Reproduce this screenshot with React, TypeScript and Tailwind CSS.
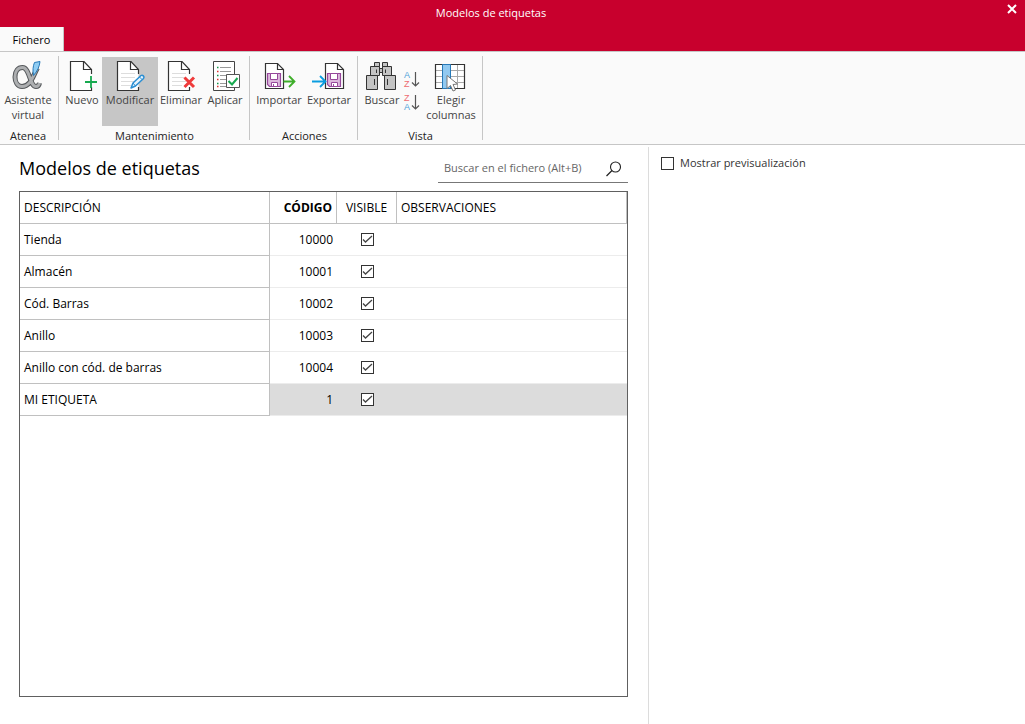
import { useState, type ReactNode } from "react";

const rows = [
  { name: "Tienda", code: 10000 },
  { name: "Almacén", code: 10001 },
  { name: "Cód. Barras", code: 10002 },
  { name: "Anillo", code: 10003 },
  { name: "Anillo con cód. de barras", code: 10004 },
  { name: "MI ETIQUETA", code: 1 },
];

function Icon({ children }: { children: ReactNode }) {
  return (
    <svg viewBox="0 0 32 32" className="h-8 w-8 shrink-0 overflow-visible" fill="none" aria-hidden="true">
      {children}
    </svg>
  );
}

function Page({ lines = false }: { lines?: boolean }) {
  return (
    <>
      <path d="M24.5 14V9.5L17 1.5H3.5V30.5H24.5V27" fill="#fff" stroke="#333" strokeWidth="1.2" />
      <path d="M16.5 1.5V9.5H24.5" stroke="#333" strokeWidth="1.2" />
      {lines && <path d="M7 13.5H21M7 17.5H21M7 21.5H21M7 25.5H17" stroke="#ddd" />}
    </>
  );
}

function DiskPage() {
  return (
    <>
      <path d="M2.5 3.5H14.5L20.5 9.5V28.5H2.5Z" fill="#fff" stroke="#333" strokeWidth="1.2" />
      <path d="M14.5 3.5V9.5H20.5" stroke="#333" strokeWidth="1.2" />
      <path d="M4.5 13.5H17.5V26.5H6.5L4.5 24.5Z" fill="#dcb9dc" stroke="#96479b" strokeWidth="1.2" />
      <path d="M7.5 13.5H14.5V19.5H7.5Z" fill="#fff" stroke="#96479b" />
      <path d="M8.5 22.5H14.5V26.5H8.5Z" fill="#fff" stroke="#96479b" />
      <path d="M10.5 24V26" stroke="#96479b" />
    </>
  );
}

function AlphaIcon() {
  const d = "M25.5 8C21.5 14.5 19 26.5 10 26.5C5.5 26.5 3 22 3 17C3 11 6 7.5 10.5 7.5C18 7.5 17.5 26.5 24 26.5C26 26.5 27 25.5 27.5 23";
  return (
    <Icon>
      <path d={d} stroke="#55585b" strokeWidth="5" />
      <path d={d} stroke="#adafb1" strokeWidth="3" />
      <path d="M22.5 2.5L28 1.5C27.5 6.5 25.5 11 21.5 15.5C20.5 10.5 21 6 22.5 2.5Z" fill="#8fcdf3" stroke="#2679b8" />
    </Icon>
  );
}

function NewIcon() {
  return (
    <Icon>
      <g transform="translate(1 0)">
        <Page />
      </g>
      <path d="M25 16V28M19 22H31" stroke="#17a94f" strokeWidth="1.8" />
    </Icon>
  );
}

function EditIcon() {
  return (
    <Icon>
      <Page lines />
      <path d="M17 28L19 23L27 15.5C28.5 14.5 31 16.5 29.5 18.5L21.5 26Z" fill="#e6f3fc" stroke="#2b8ed2" strokeWidth="1.5" strokeLinejoin="round" />
      <path d="M25.5 17L28 19.5M19 23L21.5 26" stroke="#2b8ed2" />
    </Icon>
  );
}

function DeleteIcon() {
  return (
    <Icon>
      <Page lines />
      <path d="M19.5 17.5L29 27M29 17.5L19.5 27" stroke="#ef3b3b" strokeWidth="3" />
    </Icon>
  );
}

function ApplyIcon() {
  return (
    <Icon>
      <path d="M4.5 1.5H25.5V30.5H4.5Z" fill="#fff" stroke="#444" />
      <path d="M11 7.5H22M11 11.5H22M11 15.5H18M11 19.5H17M11 23.5H17M11 26.5H19" stroke="#999" />
      <path d="M8 7.5H9.5M8 15.5H9.5M8 23.5H9.5" stroke="#16934a" strokeWidth="1.5" />
      <path d="M8 11.5H9.5M8 19.5H9.5M8 26.5H9.5" stroke="#d33" strokeWidth="1.5" />
      <path d="M17.5 14.5H30.5V27.5H17.5Z" fill="#fff" stroke="#555" />
      <path d="M19.5 21L23 24.5L28.5 18" stroke="#17a94f" strokeWidth="2" />
    </Icon>
  );
}

function ImportIcon() {
  return (
    <Icon>
      <DiskPage />
      <path d="M20.5 21.5H31.5M26 16L31.5 21.5L26 27" stroke="#3fae2a" strokeWidth="1.8" />
    </Icon>
  );
}

function ExportIcon() {
  return (
    <Icon>
      <g transform="translate(10 0)">
        <DiskPage />
      </g>
      <path d="M-1 21.5H12M7 16L12.5 21.5L7 27" stroke="#0a9de0" strokeWidth="1.8" />
    </Icon>
  );
}

function BinocularsIcon() {
  return (
    <Icon>
      <g fill="#c4c4c4" stroke="#333">
        <path d="M8.5 2.5H13.5V6.5H8.5ZM16.5 2.5H21.5V6.5H16.5Z" />
        <path d="M13.5 8.5H16.5V12.5H13.5Z" />
        <path d="M4.5 6.5H13.5V15.5H4.5ZM16.5 6.5H25.5V15.5H16.5Z" />
        <path d="M0.5 15.5H11.5V29.5H0.5ZM18.5 15.5H29.5V29.5H18.5Z" />
        <path d="M8.5 19V25M21.5 19V25M10.5 9.5V13M19.5 9.5V13" />
      </g>
    </Icon>
  );
}

function ColumnsIcon() {
  return (
    <Icon>
      <path d="M0.5 4.5H29.5V28.5H0.5Z" fill="#fff" />
      <path d="M1 10.5H29M1 16.5H29M1 22.5H29M22.5 5V28" stroke="#aaa" />
      <path d="M0.5 4.5H29.5V28.5H0.5Z" stroke="#333" strokeWidth="1.2" />
      <path d="M7.5 4.5H15.5V28.5H7.5Z" fill="#91c9f0" stroke="#2679b8" />
      <path d="M12 15.5V28.5L15.5 25.5L18 31L20.5 30L18 24.5L22.5 24Z" fill="#fff" stroke="#777" />
    </Icon>
  );
}

function SortIcon({ desc = false }: { desc?: boolean }) {
  return (
    <svg viewBox="0 0 16 18" className="h-[18px] w-4 overflow-visible" fill="none" aria-hidden="true">
      <text x="0" y="7" fontSize="9" fontFamily="Liberation Sans, sans-serif" fill={desc ? "#ee6b70" : "#4f9fd8"}>
        {desc ? "Z" : "A"}
      </text>
      <text x="0" y="16" fontSize="9" fontFamily="Liberation Sans, sans-serif" fill={desc ? "#4f9fd8" : "#ee6b70"}>
        {desc ? "A" : "Z"}
      </text>
      <path d="M11.5 1V15M8 11.5L11.5 15L15 11.5" stroke="#555" strokeWidth="1.2" />
    </svg>
  );
}

type ToolProps = { icon: ReactNode; label: string; width: string; active?: boolean };

function Tool({ icon, label, width, active }: ToolProps) {
  return (
    <button
      type="button"
      className={`flex h-[69px] flex-col items-center pt-[3px] text-[11px] leading-[15px] text-[#444] ${width} ${active ? "bg-[#c6c6c6]" : "hover:bg-gray-200"}`}
    >
      {icon}
      <span className="flex flex-col items-center whitespace-nowrap">
        {label.split(" ").map((word) => (
          <span key={word}>{word}</span>
        ))}
      </span>
    </button>
  );
}

function Group({ title, width, children }: { title: string; width: string; children: ReactNode }) {
  return (
    <section className={`flex shrink-0 flex-col justify-between border-r border-[#c6c6c6] ${width}`}>
      <div className="flex pt-px">{children}</div>
      <h2 className="text-center text-[11px] leading-[8px] text-[#222]">{title}</h2>
    </section>
  );
}

type CheckProps = { id?: string; label?: string; checked: boolean; onChange: () => void };

function Check({ id, label, checked, onChange }: CheckProps) {
  return (
    <span className="inline-grid h-[13px] w-[13px] shrink-0 align-middle">
      <input
        id={id}
        type="checkbox"
        aria-label={label}
        checked={checked}
        onChange={onChange}
        className="peer col-start-1 row-start-1 h-[13px] w-[13px] appearance-none border border-[#333] bg-white"
      />
      <svg viewBox="0 0 13 13" className="pointer-events-none col-start-1 row-start-1 hidden peer-checked:block" fill="none">
        <path d="M2 6.5L4.5 9L11 3" stroke="#444" strokeWidth="1.3" />
      </svg>
    </span>
  );
}

export default function App() {
  const [visible, setVisible] = useState<boolean[]>(rows.map(() => true));
  const [preview, setPreview] = useState(false);
  const [query, setQuery] = useState("");

  const toggle = (i: number) => setVisible(visible.map((v, n) => (n === i ? !v : v)));

  return (
    <div className="flex min-h-screen flex-col bg-white font-['Open_Sans','Noto_Sans',sans-serif] text-[12px] text-black">
      <header className="bg-[#c8002d]">
        <div className="grid h-[27px] grid-cols-[1fr_auto_1fr] items-center text-white">
          <h1 className="col-start-2 pr-[43px] text-[11px]">Modelos de etiquetas</h1>
          <button type="button" aria-label="Cerrar" className="mr-2 mb-2.5 justify-self-end">
            <svg viewBox="0 0 10 10" className="h-[10px] w-[10px]" fill="none">
              <path d="M1 1L9 9M9 1L1 9" stroke="#fff" strokeWidth="2" />
            </svg>
          </button>
        </div>
        <nav className="flex">
          <button type="button" className="-mb-px h-[25px] w-16 border-r border-[#c6c6c6] bg-[#fafafa] pt-0.5 text-center text-[11px]">
            Fichero
          </button>
        </nav>
      </header>

      <div className="flex h-[94px] border-y border-[#c6c6c6] bg-[#fafafa] pt-1 pb-1">
        <Group title="Atenea" width="w-[59px] pr-[2px]">
          <Tool icon={<AlphaIcon />} label="Asistente virtual" width="w-14" />
        </Group>
        <Group title="Mantenimiento" width="w-[191px] pl-[3px] pr-[2px]">
          <Tool icon={<NewIcon />} label="Nuevo" width="w-10" />
          <Tool icon={<EditIcon />} label="Modificar" width="w-14" active />
          <Tool icon={<DeleteIcon />} label="Eliminar" width="w-[46px]" />
          <Tool icon={<ApplyIcon />} label="Aplicar" width="w-[42px]" />
        </Group>
        <Group title="Acciones" width="w-[108px] pl-1 pr-[2px]">
          <Tool icon={<ImportIcon />} label="Importar" width="w-[50px]" />
          <Tool icon={<ExportIcon />} label="Exportar" width="w-[50px]" />
        </Group>
        <Group title="Vista" width="w-[125px] pl-[3px] pr-[2px]">
          <Tool icon={<BinocularsIcon />} label="Buscar" width="w-[42px]" />
          <div className="flex w-[22px] flex-col gap-[5px] pt-[14px] pl-px">
            <button type="button" aria-label="Orden ascendente">
              <SortIcon />
            </button>
            <button type="button" aria-label="Orden descendente">
              <SortIcon desc />
            </button>
          </div>
          <Tool icon={<ColumnsIcon />} label="Elegir columnas" width="w-[52px]" />
        </Group>
      </div>

      <main className="grid flex-1 grid-cols-[649fr_376fr] pt-[2px]">
        <section className="flex flex-col border-r border-[#dcdcdc] pr-5 pb-[27px] pl-[19px]">
          <div className="flex h-[36px] items-end justify-between">
            <h2 className="pb-[3px] text-[18px] leading-[24px]">Modelos de etiquetas</h2>
            <label className="flex h-7 w-[190px] items-center border-b border-[#777] pr-1.5 pl-1.5">
              <input
                type="text"
                value={query}
                onChange={(e) => setQuery(e.target.value)}
                placeholder="Buscar en el fichero (Alt+B)"
                aria-label="Buscar en el fichero"
                className="min-w-0 flex-1 bg-transparent text-[11px] outline-none placeholder:text-[#666]"
              />
              <svg viewBox="0 0 16 16" className="h-4 w-4 shrink-0" fill="none">
                <circle cx="9.5" cy="6" r="5" stroke="#222" strokeWidth="1.1" />
                <path d="M6 9.5L0.5 15" stroke="#222" strokeWidth="1.2" />
              </svg>
            </label>
          </div>

          <div className="mt-2 flex-1 border border-[#606060]">
            <table className="w-full table-fixed border-separate border-spacing-0">
              <thead>
                <tr className="h-8 text-left [&>th]:border-r [&>th]:border-b [&>th]:border-[#c0c0c0] [&>th]:px-1">
                  <th className="w-[250px] font-normal">DESCRIPCIÓN</th>
                  <th className="w-[67px] text-right font-bold">CÓDIGO</th>
                  <th className="w-[60px] text-center font-normal">VISIBLE</th>
                  <th className="font-normal">OBSERVACIONES</th>
                </tr>
              </thead>
              <tbody>
                {rows.map((row, i) => (
                  <tr key={row.code} className="h-8 [&>td]:border-b [&>td]:border-[#ececec] last:[&>td]:bg-[#dcdcdc]">
                    <th className="border-r border-b border-[#c0c0c0] bg-white px-1 text-left font-normal">{row.name}</th>
                    <td className="pr-1 text-right">{row.code}</td>
                    <td className="text-center leading-none">
                      <Check label={`${row.name} visible`} checked={visible[i]} onChange={() => toggle(i)} />
                    </td>
                    <td />
                  </tr>
                ))}
              </tbody>
            </table>
          </div>
        </section>

        <aside className="pt-2 pl-3">
          <label htmlFor="preview" className="flex items-center gap-1.5 text-[11px] leading-[16px] text-[#333]">
            <Check id="preview" checked={preview} onChange={() => setPreview(!preview)} />
            Mostrar previsualización
          </label>
        </aside>
      </main>
    </div>
  );
}
